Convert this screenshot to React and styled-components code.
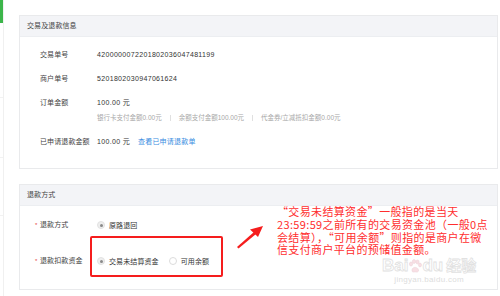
import React from "react"
import styled, { createGlobalStyle } from "styled-components"

const GlobalStyle = createGlobalStyle`
  html, body {
    margin: 0;
    padding: 0;
    background: #fff;
  }
  body {
    font-family: "Liberation Sans", "Noto Sans CJK SC", sans-serif;
    color: #333;
  }
`

const Page = styled.div`
  position: relative;
  display: flex;
  width: 500px;
  height: 296px;
  overflow: hidden;
`

const Sidebar = styled.div`
  position: relative;
  width: 3px;
  border-right: 1px solid #f0f0f0;
  display: flex;
  flex-direction: column;
`

const SideActive = styled.div`
  height: 23px;
  background: #3cb54a;
`

const SideItem = styled.div`
  height: ${(p) => p.h}px;
  border-bottom: 1px solid #f2f2f2;
`

const Main = styled.div`
  flex: 1;
  padding: 15px 2px 0 15px;
  display: flex;
  flex-direction: column;
  gap: 15px;
`

const Card = styled.section`
  border: 1px solid #e9eaec;
  background: #fff;
`

const CardHeader = styled.div`
  height: 20px;
  line-height: 20px;
  padding-left: 7px;
  background: #f3f4f7;
  border-bottom: 1px solid #eceef1;
  font-size: 7px;
  letter-spacing: 0.1px;
  color: #444;
`

const CardBody = styled.div`
  padding: ${(p) => p.pad};
  display: flex;
  flex-direction: column;
  gap: ${(p) => p.gap}px;
`

const Row = styled.div`
  display: flex;
  align-items: flex-start;
`

const Label = styled.div`
  position: relative;
  width: 57px;
  flex-shrink: 0;
  padding-left: 20px;
  line-height: 12px;
  font-size: 7px;
  letter-spacing: 0.1px;
  color: #444;
`

const Star = styled.span`
  position: absolute;
  left: 15px;
  top: 0;
  color: #e64340;
  font-size: 6px;
`

const Value = styled.div`
  display: flex;
  flex-direction: column;
  gap: 3px;
`

const Text = styled.div`
  line-height: 12px;
  font-size: 7px;
  letter-spacing: 0.33px;
  color: #333;
  white-space: nowrap;
`

const Link = styled.a`
  margin-left: 8px;
  color: #3a8ddf;
  letter-spacing: 0.2px;
  text-decoration: none;
`

const Sub = styled.div`
  display: flex;
  align-items: center;
  gap: 8px;
  line-height: 12px;
  font-size: 6.5px;
  color: #a8a8a8;
  white-space: nowrap;
`

const Divider = styled.span`
  width: 1px;
  height: 6px;
  background: #e0e0e0;
`

const Radios = styled.div`
  display: flex;
  align-items: center;
  gap: 10px;
  height: 12px;
`

const Option = styled.label`
  display: flex;
  align-items: center;
  gap: 4px;
  font-size: 7px;
  letter-spacing: 0.1px;
  color: #333;
`

const Dot = styled.span`
  box-sizing: border-box;
  width: 8px;
  height: 8px;
  border-radius: 50%;
  border: 1px solid ${(p) => (p.on ? "#e2e2e2" : "#dcdcdc")};
  background: ${(p) => (p.on ? "#eeeeee" : "#fff")};
  display: flex;
  align-items: center;
  justify-content: center;

  &::after {
    content: "";
    width: 3px;
    height: 3px;
    border-radius: 50%;
    background: ${(p) => (p.on ? "#8a8a8a" : "transparent")};
  }
`

const RedBox = styled.div`
  position: absolute;
  left: 90px;
  top: 236px;
  width: 129px;
  height: 37px;
  border: 2px solid #f51d1d;
  border-radius: 2px;
`

const Arrow = styled.svg`
  position: absolute;
  left: 234px;
  top: 222px;
`

const Note = styled.p`
  position: absolute;
  left: 277px;
  top: 205px;
  margin: 0;
  font-family: "Noto Sans CJK SC", sans-serif;
  font-size: 11px;
  line-height: 12.8px;
  letter-spacing: 0.35px;
  color: #ff2e2e;
  white-space: nowrap;
`

const Watermark = styled.div`
  position: absolute;
  left: 382px;
  top: 257px;
  display: flex;
  flex-direction: column;
  align-items: center;
  opacity: 0.55;
`

const Brand = styled.div`
  display: flex;
  align-items: center;
  font-family: "Liberation Sans", "Noto Sans CJK SC", sans-serif;
  font-weight: 700;
  font-size: 17px;
  line-height: 18px;
  color: rgba(255, 255, 255, 0.6);
  -webkit-text-stroke: 0.8px #c9c9c9;
`

const Site = styled.div`
  font-family: "Liberation Sans", sans-serif;
  font-size: 8px;
  line-height: 10px;
  letter-spacing: 0.3px;
  color: #c2c2c2;
`

const Paw = () => (
  <svg width="14" height="16" viewBox="0 0 14 16">
    <g fill="#f3c6cf" stroke="#d9a9b3" strokeWidth="0.5">
      <ellipse cx="3" cy="6" rx="1.6" ry="2" />
      <ellipse cx="6" cy="3.5" rx="1.6" ry="2" />
      <ellipse cx="9.5" cy="4" rx="1.6" ry="2" />
      <ellipse cx="12" cy="7" rx="1.5" ry="1.9" />
      <path d="M4 12 C4 8.5 10 8.5 10.5 12 C11 14 8.5 14.5 7 13.8 C5.5 14.5 3.5 14 4 12 Z" />
    </g>
  </svg>
)

const App = () => {
  return (
    <>
      <GlobalStyle />
      <Page>
        <Sidebar>
          <SideActive />
          <SideItem h={74} />
          <SideItem h={59} />
          <SideItem h={57} />
        </Sidebar>
        <Main>
          <Card>
            <CardHeader>交易及退款信息</CardHeader>
            <CardBody pad="12px 0 20px" gap={12}>
              <Row>
                <Label>交易单号</Label>
                <Value>
                  <Text>4200000072201802036047481199</Text>
                </Value>
              </Row>
              <Row>
                <Label>商户单号</Label>
                <Value>
                  <Text>5201802030947061624</Text>
                </Value>
              </Row>
              <Row>
                <Label>订单金额</Label>
                <Value>
                  <Text>100.00 元</Text>
                  <Sub>
                    <span>银行卡支付金额0.00元</span>
                    <Divider />
                    <span>余额支付金额100.00元</span>
                    <Divider />
                    <span>代金券/立减抵扣金额0.00元</span>
                  </Sub>
                </Value>
              </Row>
              <Row>
                <Label>已申请退款金额</Label>
                <Value>
                  <Text>
                    100.00 元<Link href="#">查看已申请退款单</Link>
                  </Text>
                </Value>
              </Row>
            </CardBody>
          </Card>
          <Card>
            <CardHeader>退款方式</CardHeader>
            <CardBody pad="13px 0 22px" gap={24}>
              <Row>
                <Label>
                  <Star>*</Star>退款方式
                </Label>
                <Radios>
                  <Option>
                    <Dot on />
                    原路退回
                  </Option>
                </Radios>
              </Row>
              <Row>
                <Label>
                  <Star>*</Star>退款扣款资金
                </Label>
                <Radios>
                  <Option>
                    <Dot on />
                    交易未结算资金
                  </Option>
                  <Option>
                    <Dot />
                    可用余额
                  </Option>
                </Radios>
              </Row>
            </CardBody>
          </Card>
        </Main>

        <RedBox />
        <Arrow width="34" height="30" viewBox="0 0 34 30">
          <polygon points="3,25 4.5,26.5 22,12 20,10" fill="#f51d1d" />
          <polygon points="29,4 16,7.5 24,15" fill="#f51d1d" />
        </Arrow>
        <Note lang="zh-CN">
          “交易未结算资金”一般指的是当天
          <br />
          23:59:59之前所有的交易资金池（一般0点
          <br />
          会结算），“可用余额”则指的是商户在微
          <br />
          信支付商户平台的预储值金额。
        </Note>
        <Watermark>
          <Brand>
            Bai
            <Paw />
            du
            <span style={{ marginLeft: 3, fontSize: 15 }}>经验</span>
          </Brand>
          <Site>jingyan.baidu.com</Site>
        </Watermark>
      </Page>
    </>
  )
}

export default App
